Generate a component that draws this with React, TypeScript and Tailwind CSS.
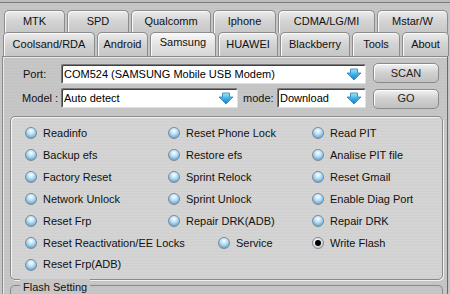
import React from "react";

const brushed =
  "bg-[repeating-linear-gradient(180deg,#d0d0d0_0px,#dadada_1px,#cbcbcb_2px,#d5d5d5_3px)]";

function Arrow() {
  return (
    <svg width="16" height="13" viewBox="0 0 16 13" className="shrink-0">
      <defs>
        <linearGradient id="ag" x1="0" y1="0" x2="0" y2="1">
          <stop offset="0" stopColor="#a8e6fd" />
          <stop offset="0.5" stopColor="#3fb0e6" />
          <stop offset="1" stopColor="#1a7fc0" />
        </linearGradient>
      </defs>
      <path d="M4.5 1 H11.5 V5 H15 L8 12 L1 5 H4.5 Z" fill="url(#ag)" stroke="#2a7fb5" strokeWidth="0.8" />
    </svg>
  );
}

function Combo({ text, w }: { text: string; w: string }) {
  return (
    <div
      className={`${w} h-[20px] bg-white border border-[#7a7a7a] border-b-[#e0e0e0] border-r-[#e0e0e0] rounded-[2px] flex items-center pl-[2px] pr-[3px] shadow-[inset_1px_1px_0_#404040]`}
    >
      <span className="flex-1 truncate text-[11px] text-black pt-[1px]">{text}</span>
      <Arrow />
    </div>
  );
}

function Btn({ text }: { text: string }) {
  return (
    <div className="w-[66px] h-[20px] rounded-[5px] border border-[#8a8a8a] bg-[linear-gradient(180deg,#f2f2f2,#d0d0d0_50%,#c0c0c0)] flex items-center justify-center text-[11px] text-[#222] shadow-[inset_1px_1px_0_#fff]">
      {text}
    </div>
  );
}

function Radio({ label, checked }: { label: string; checked?: boolean }) {
  return (
    <div className="flex items-center gap-[6px]">
      <div
        className={`w-[12px] h-[12px] rounded-full border border-[#7d8a96] flex items-center justify-center ${
          checked
            ? "bg-[radial-gradient(circle_at_40%_35%,#ffffff,#d8d8d8_60%,#a8a8a8)]"
            : "bg-[radial-gradient(circle_at_50%_30%,#ffffff,#b6e0f6_40%,#6aa6cf_80%,#4f86b0)]"
        }`}
      >
        {checked && <div className="w-[6px] h-[6px] rounded-full bg-black" />}
      </div>
      <span className="text-[11px] text-[#111] whitespace-nowrap">{label}</span>
    </div>
  );
}

const tabBase =
  "h-full rounded-t-[5px] border border-b-0 border-[#8c8c8c] flex items-center justify-center text-[11px] text-[#111] bg-[linear-gradient(180deg,#ececec,#d4d4d4_45%,#c6c6c6)] shadow-[inset_1px_1px_0_#fafafa]";

export default function App() {
  const row1: [string, number][] = [
    ["MTK", 61],
    ["SPD", 62],
    ["Qualcomm", 80],
    ["Iphone", 63],
    ["CDMA/LG/MI", 97],
    ["Mstar/W", 71],
  ];
  const rows: [string, string, string][] = [
    ["Readinfo", "Reset Phone Lock", "Read PIT"],
    ["Backup efs", "Restore efs", "Analise PIT file"],
    ["Factory Reset", "Sprint Relock", "Reset Gmail"],
    ["Network Unlock", "Sprint Unlock", "Enable Diag Port"],
    ["Reset Frp", "Repair DRK(ADB)", "Repair DRK"],
  ];
  return (
    <div
      className="w-[450px] h-[294px] overflow-hidden bg-[repeating-linear-gradient(180deg,#c3c3c3_0px,#cbcbcb_1px,#bfbfbf_2px,#c7c7c7_3px)]"
      style={{ fontFamily: '"Liberation Sans", Arial, sans-serif' }}
    >
      <div className="h-[3px] border-b border-[#7a7a7a] bg-[#bdbdbd]" />
      <div className="h-[7px]" />
      {/* Tab row 1 */}
      <div className="flex h-[23px] pl-[4px] gap-[2px]">
        {row1.map(([t, w]) => (
          <div key={t} className={tabBase} style={{ width: w }}>
            <span className="-mt-[2px]">{t}</span>
          </div>
        ))}
      </div>
      {/* Tab row 2 */}
      <div className="flex h-[24px] pl-[3px] gap-[2px] items-end -mt-[1px]">
        <div className={`${tabBase} w-[92px]`}>Coolsand/RDA</div>
        <div className={`${tabBase} w-[51px]`}>Android</div>
        <div
          className={`${tabBase} w-[66px] h-[26px] -mt-[2px] z-10 bg-[linear-gradient(180deg,#f8f8f8,#e4e4e4_50%,#d6d6d6)]`}
        >
          <span className="-mt-[4px]">Samsung</span>
        </div>
        <div className={`${tabBase} w-[60px]`}>HUAWEI</div>
        <div className={`${tabBase} w-[70px]`}>Blackberry</div>
        <div className={`${tabBase} w-[48px]`}>Tools</div>
        <div className={`${tabBase} w-[47px]`}>About</div>
      </div>
      {/* Panel */}
      <div className="mx-[2px] border-l border-t border-r border-[#8a8a8a] border-r-[#6a6a6a] h-[240px] shadow-[inset_1px_1px_0_#e8e8e8]">
        <div className="flex items-center mt-[7px] h-[20px]">
          <span className="w-[58px] pl-[20px] text-[11px] text-[#111]">Port:</span>
          <Combo text="COM524 (SAMSUNG Mobile USB Modem)" w="w-[305px]" />
          <div className="ml-[7px] -mt-[2px]">
            <Btn text="SCAN" />
          </div>
        </div>
        <div className="flex items-center mt-[4px] h-[20px]">
          <span className="w-[58px] pl-[19px] text-[11px] text-[#111]">Model :</span>
          <Combo text="Auto detect" w="w-[177px]" />
          <span className="ml-[5px] w-[34px] text-[11px] text-[#111]">mode:</span>
          <Combo text="Download" w="w-[89px]" />
          <div className="ml-[7px] mt-[1px]">
            <Btn text="GO" />
          </div>
        </div>
        {/* Group box */}
        <div
          className={`ml-[7px] mt-[8px] w-[433px] h-[164px] rounded-[5px] border border-[#8a8a8a] shadow-[inset_1px_1px_0_#f4f4f4,1px_1px_0_#f0f0f0] ${brushed} pt-[5px]`}
        >
          {rows.map((r, i) => (
            <div key={i} className="flex h-[22px] items-center">
              <div className="w-[157px] pl-[14px]">
                <Radio label={r[0]} />
              </div>
              <div className="w-[144px]">
                <Radio label={r[1]} />
              </div>
              <div>
                <Radio label={r[2]} />
              </div>
            </div>
          ))}
          <div className="flex h-[22px] items-center">
            <div className="w-[207px] pl-[14px]">
              <Radio label="Reset Reactivation/EE Locks" />
            </div>
            <div className="w-[94px]">
              <Radio label="Service" />
            </div>
            <div>
              <Radio label="Write Flash" checked />
            </div>
          </div>
          <div className="flex h-[21px] items-center">
            <div className="pl-[14px]">
              <Radio label="Reset Frp(ADB)" />
            </div>
          </div>
        </div>
        {/* Flash Setting */}
        <div className="relative ml-[7px] mt-[5px] w-[433px] h-[20px] rounded-t-[5px] border-t border-l border-r border-[#8a8a8a]">
          <span className="absolute -top-[7px] left-[9px] px-[3px] text-[11px] text-[#111] bg-[#c6c6c6]">
            Flash Setting
          </span>
        </div>
      </div>
    </div>
  );
}
